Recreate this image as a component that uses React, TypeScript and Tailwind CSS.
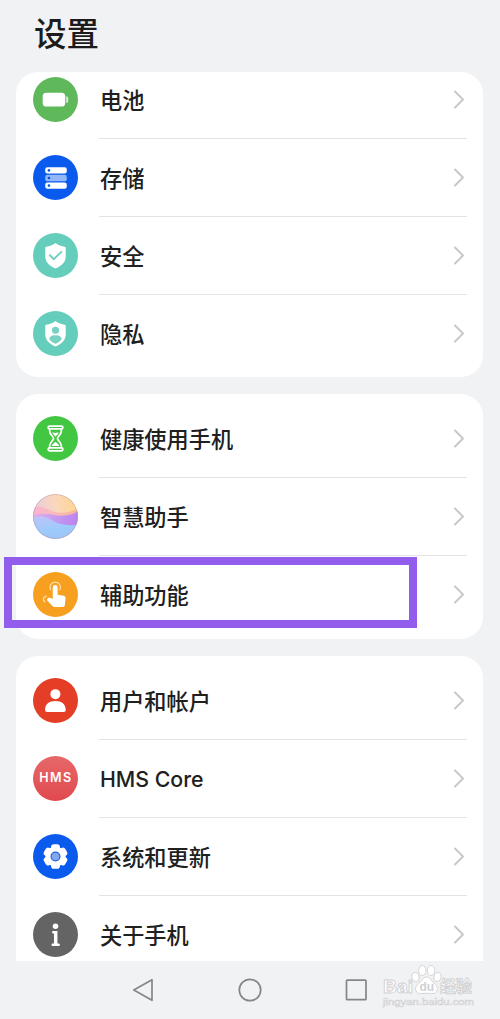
import React from 'react';

interface SettingItem {
  label: string;
  icon: React.ReactNode;
}

const BatteryIcon = () => (
  <svg viewBox="0 0 44 44" className="h-[45px] w-[45px] shrink-0">
    <circle cx="22" cy="22" r="22" fill="#5fb95b" />
    <rect x="9.5" y="15.3" width="22" height="13.6" rx="3.6" fill="#fff" />
    <path d="M32.4 19h.7a1.3 1.3 0 0 1 1.3 1.3v3.6a1.3 1.3 0 0 1-1.3 1.3h-.7z" fill="#d3edd1" />
  </svg>
);

const StorageIcon = () => (
  <svg viewBox="0 0 44 44" className="h-[45px] w-[45px] shrink-0">
    <circle cx="22" cy="22" r="22" fill="#0b5aee" />
    <rect x="12" y="12" width="21" height="6.2" rx="2" fill="#fff" />
    <rect x="12" y="19.4" width="21" height="6.2" rx="2" fill="#92b8fb" />
    <rect x="12" y="26.8" width="21" height="6.2" rx="2" fill="#fff" />
    <circle cx="15.6" cy="15.1" r="1.3" fill="#0b5aee" />
    <circle cx="15.6" cy="22.5" r="1.3" fill="#0b4fd8" />
    <circle cx="15.6" cy="29.9" r="1.3" fill="#0b5aee" />
  </svg>
);

const shieldPath =
  'M22 9.800c2.900 2.200 5.900 3.300 9.100 3.700.6.1.9.4.9 1v8.500c0 5.300-3.800 9.200-10 11.800-6.200-2.600-10-6.500-10-11.800v-8.500c0-.6.3-.9.9-1 3.200-.4 6.200-1.500 9.100-3.700z';

const SecurityIcon = () => (
  <svg viewBox="0 0 44 44" className="h-[45px] w-[45px] shrink-0">
    <circle cx="22" cy="22" r="22" fill="#64cdbb" />
    <path d={shieldPath} fill="#fff" />
    <path d="M16.500 21.800l3.900 3.800 7.300-7.200" fill="none" stroke="#74d0c0" strokeWidth="1.9" strokeLinecap="round" strokeLinejoin="round" />
  </svg>
);

const PrivacyIcon = () => (
  <svg viewBox="0 0 44 44" className="h-[45px] w-[45px] shrink-0">
    <circle cx="22" cy="22" r="22" fill="#64cdbb" />
    <path d={shieldPath} fill="#fff" />
    <circle cx="22" cy="18.8" r="3.5" fill="#78d2c3" />
    <path d="M16 27.800c0-2.600 2.200-4 6-4s6 1.400 6 4c-1.600 1.900-3.600 3.200-6 4.200-2.400-1-4.400-2.300-6-4.200z" fill="#78d2c3" />
  </svg>
);

const HourglassIcon = () => (
  <svg viewBox="0 0 44 44" className="h-[45px] w-[45px] shrink-0">
    <circle cx="22" cy="22" r="22" fill="#43c743" />
    <g fill="none" stroke="#fff" strokeWidth="1.7" strokeLinejoin="round" strokeLinecap="round">
      <rect x="14.8" y="9.9" width="14.4" height="2.8" rx="1.4" />
      <rect x="14.8" y="31.2" width="14.4" height="2.8" rx="1.4" />
      <path d="M16.300 13v2c0 3.100 3.800 5 3.800 7s-3.800 3.900-3.800 7v2M27.700 13v2c0 3.100-3.800 5-3.800 7s3.800 3.900 3.800 7v2" />
    </g>
    <path d="M18.800 16.300c1.200-.7 2.200.5 3.200.3 1-.2 2-.9 3.200-.3-.5 1.500-2.200 2.600-3.200 4-1-1.400-2.700-2.500-3.200-4zM18.300 29.300c.3-1.700 2.300-3 3.700-4.200 1.400 1.200 3.400 2.500 3.700 4.200z" fill="#fff" />
  </svg>
);

const AssistantIcon = () => (
  <svg viewBox="0 0 44 44" className="h-[45px] w-[45px] shrink-0">
    <defs>
      <clipPath id="orb">
        <circle cx="22" cy="22" r="22" />
      </clipPath>
      <filter id="soften">
        <feGaussianBlur stdDeviation="0.7" />
      </filter>
      <linearGradient id="sky" x1="0" y1="0.3" x2="1" y2="0.1">
        <stop offset="0" stopColor="#e7ccdd" />
        <stop offset="0.5" stopColor="#fad7bd" />
        <stop offset="1" stopColor="#ffd58a" />
      </linearGradient>
      <linearGradient id="peach" x1="0" y1="0" x2="1" y2="0">
        <stop offset="0" stopColor="#f8b5d0" />
        <stop offset="0.5" stopColor="#fbb9bd" />
        <stop offset="1" stopColor="#fcb48e" />
      </linearGradient>
      <linearGradient id="violet" x1="0" y1="0" x2="1" y2="0.3">
        <stop offset="0" stopColor="#efb0e0" />
        <stop offset="0.55" stopColor="#c19af0" />
        <stop offset="1" stopColor="#be80f0" />
      </linearGradient>
      <linearGradient id="sea" x1="0.3" y1="0" x2="0.6" y2="1">
        <stop offset="0" stopColor="#bcc5fa" />
        <stop offset="0.5" stopColor="#9bcbfb" />
        <stop offset="1" stopColor="#a4bff5" />
      </linearGradient>
    </defs>
    <g clipPath="url(#orb)">
      <rect width="44" height="44" fill="url(#sky)" />
      <g filter="url(#soften)">
        <path d="M-2 14c7-3 13-1 19 2s15 4 29-2v32H-2z" fill="url(#peach)" />
        <path d="M-2 21c9-2 16-2 23-.5s16 1 25-4.500v32H-2z" fill="url(#violet)" />
        <path d="M-2 23c9-2 15-1 21 3s17 6 27 3v18H-2z" fill="url(#sea)" />
      </g>
      <circle cx="22" cy="22" r="21.6" fill="none" stroke="#a593ad" strokeWidth="0.8" opacity="0.6" />
    </g>
  </svg>
);

const TouchIcon = () => (
  <svg viewBox="0 0 44 44" className="h-[45px] w-[45px] shrink-0">
    <circle cx="22" cy="22" r="22" fill="#f7a01f" />
    <path d="M19.300 15.200a2.400 2.400 0 0 1 4.800 0v7l5.800 1c1.400.3 2 1.200 1.900 2.500l-.6 6.400c-.1 1.300-.8 2-2.100 2h-8.300c-.9 0-1.500-.3-2.100-1l-4.500-5.100c-.8-1-.4-2.300.8-2.700.9-.3 2.200 0 4.300 1z" fill="#fff" />
    <path d="M17.200 17.300a5.100 5.100 0 1 1 9 0" fill="none" stroke="#ffe0ae" strokeWidth="1.2" strokeLinecap="round" />
    <path d="M12.900 23.600c-3 .9-3.500 3.400-1.500 5.600" fill="none" stroke="#ffe0ae" strokeWidth="1.2" strokeLinecap="round" />
  </svg>
);

const UserIcon = () => (
  <svg viewBox="0 0 44 44" className="h-[45px] w-[45px] shrink-0">
    <circle cx="22" cy="22" r="22" fill="#e43e26" />
    <circle cx="21.900" cy="15.8" r="4.9" fill="#fff" />
    <path d="M11.800 31c0-5.400 4-8.500 10.100-8.500S32 25.600 32 31c0 1.500-.7 2.200-2.100 2.200h-16c-1.400 0-2.100-.7-2.100-2.200z" fill="#fff" />
  </svg>
);

const HmsIcon = () => (
  <div className="flex h-[45px] w-[45px] shrink-0 items-center justify-center rounded-full bg-linear-to-b from-[#e7686a] to-[#df494e] font-['Inter','Liberation_Sans',sans-serif] text-[12.5px] font-semibold tracking-[1.5px] text-white">
    <span className="pl-px">HMS</span>
  </div>
);

const petals = [0, 60, 120, 180, 240, 300];

const UpdateIcon = () => (
  <svg viewBox="0 0 44 44" className="h-[45px] w-[45px] shrink-0">
    <circle cx="22" cy="22" r="22" fill="#0b5aee" />
    <g fill="#fff">
      <circle cx="22" cy="22" r="9.9" />
      {petals.map((angle) => (
        <rect key={angle} x="17.7" y="10" width="8.6" height="7" rx="2.8" transform={`rotate(${angle} 22 22)`} />
      ))}
    </g>
    <circle cx="22" cy="22" r="4.3" fill="#82a9f0" stroke="#2563db" strokeWidth="1.2" />
  </svg>
);

const InfoIcon = () => (
  <svg viewBox="0 0 44 44" className="h-[45px] w-[45px] shrink-0">
    <circle cx="22" cy="22" r="22" fill="#646464" />
    <circle cx="22" cy="13.9" r="2.7" fill="#fff" />
    <path d="M19.800 18.600h4.100v12.300h1.200a1.200 1.200 0 0 1 0 2.400h-5.800a1.200 1.200 0 0 1 0-2.400h1.200V21h-.7a1.200 1.200 0 0 1 0-2.400z" fill="#fff" />
  </svg>
);

const deviceItems: SettingItem[] = [
  { label: '电池', icon: <BatteryIcon /> },
  { label: '存储', icon: <StorageIcon /> },
  { label: '安全', icon: <SecurityIcon /> },
  { label: '隐私', icon: <PrivacyIcon /> },
];

const assistItems: SettingItem[] = [
  { label: '健康使用手机', icon: <HourglassIcon /> },
  { label: '智慧助手', icon: <AssistantIcon /> },
  { label: '辅助功能', icon: <TouchIcon /> },
];

const systemItems: SettingItem[] = [
  { label: '用户和帐户', icon: <UserIcon /> },
  { label: 'HMS Core', icon: <HmsIcon /> },
  { label: '系统和更新', icon: <UpdateIcon /> },
  { label: '关于手机', icon: <InfoIcon /> },
];

const isLatin = (label: string) => /^[\w ]+$/.test(label);

const SettingRow: React.FC<{ item: SettingItem; last: boolean }> = ({ item, last }) => (
  <div className="flex h-[78px] shrink-0 items-center pr-4 pl-[17px]">
    <div className="flex h-full items-center pb-px">{item.icon}</div>
    <div
      className={`ml-[21px] flex h-full flex-1 items-center justify-between border-b ${
        last ? 'border-transparent' : 'border-[#e3e3e3]'
      }`}
    >
      <span
        className={`pl-px leading-none font-medium text-[#202020] ${
          isLatin(item.label) ? "pt-0.5 font-['Inter',sans-serif] text-[21.3px]" : 'pb-px text-[22.2px]'
        }`}
      >
        {item.label}
      </span>
      <svg viewBox="0 0 12 20" className="mr-[2px] h-5 w-3">
        <path d="M2 1.500l8 8-8 8" fill="none" stroke="#c7c7c7" strokeWidth="1.9" strokeLinecap="round" strokeLinejoin="round" />
      </svg>
    </div>
  </div>
);

const SettingGroup: React.FC<{ items: SettingItem[]; className: string }> = ({ items, className }) => (
  <section className={`flex flex-col overflow-hidden bg-white ${className}`}>
    {items.map((item, i) => (
      <SettingRow key={item.label} item={item} last={i === items.length - 1} />
    ))}
  </section>
);

const Watermark = () => (
  <div className="absolute top-[964px] left-[382px] w-[96px] font-['Liberation_Sans','Noto_Sans_CJK_SC',sans-serif]">
    <svg viewBox="0 0 96 46" className="h-[46px] w-[96px]">
      <g fill="#fff" stroke="#d0d0d2" strokeWidth="0.9">
        <ellipse cx="33.5" cy="13" rx="3.6" ry="4.7" transform="rotate(-15 33.5 13)" />
        <ellipse cx="40.3" cy="6.5" rx="3.7" ry="5" />
        <ellipse cx="49" cy="6.5" rx="3.7" ry="5" />
        <ellipse cx="55.5" cy="13" rx="3.6" ry="4.7" transform="rotate(15 55.5 13)" />
        <path d="M44.500 13c3.500 0 4.700 3.500 7.500 6 3.500 3 4 5.500 3 8-1.500 3.600-5.500 2.300-10.500 2.300S35.500 30.600 34 27c-1-2.500-.5-5 3-8 2.800-2.500 4-6 7.500-6z" />
        <text x="1" y="28.5" fontSize="19" fontWeight="700" textLength="30" lengthAdjust="spacingAndGlyphs">Bai</text>
        <text x="58" y="28" fontSize="16" fontWeight="700" textLength="32">经验</text>
        <text x="37.5" y="27" fontSize="12" fontWeight="700" fill="#d0d0d2" strokeWidth="0">du</text>
        <text x="1" y="41" fontSize="8.5" textLength="91" lengthAdjust="spacingAndGlyphs" fill="#f8f8f9" strokeWidth="0.5">jingyan.baidu.com</text>
      </g>
    </svg>
  </div>
);

const NavigationBar = () => (
  <nav className="flex h-[58px] justify-center">
    <svg viewBox="0 0 236 24" className="mt-[17px] h-6 w-[236px]" fill="none" stroke="#858687" strokeWidth="1.7" strokeLinejoin="round">
      <path d="M20 1.700v20.600L1.800 12z" />
      <circle cx="118" cy="12" r="10.7" />
      <rect x="214.5" y="2.2" width="19.5" height="19.5" rx="0.8" />
    </svg>
  </nav>
);

export default function App() {
  return (
    <div className="relative flex h-[1019px] w-[500px] flex-col overflow-hidden bg-[#f1f2f4] font-['Noto_Sans_CJK_SC',sans-serif]">
      <header className="flex h-[72px] shrink-0 items-start pt-[15px] pl-[34px]">
        <h1 className="text-[32.5px] leading-[34px] font-medium text-[#1c1c1c]">设置</h1>
      </header>

      <main className="mr-[17px] ml-4 flex h-[889px] shrink-0 flex-col overflow-hidden">
        <SettingGroup items={deviceItems} className="h-[305px] shrink-0 rounded-[22px] [&>div:first-child]:-mt-[11px]" />
        <SettingGroup items={assistItems} className="mt-[17px] h-[245px] shrink-0 rounded-[22px] pt-[6px]" />
        <SettingGroup items={systemItems} className="mt-[17px] h-[305px] shrink-0 rounded-t-[22px] pt-[6px]" />
      </main>

      <NavigationBar />
      <Watermark />

      {/* highlight around the accessibility row */}
      <div className="pointer-events-none absolute top-[557px] left-[4px] h-[71px] w-[413px] border-8 border-[#925cec]" />
    </div>
  );
}
